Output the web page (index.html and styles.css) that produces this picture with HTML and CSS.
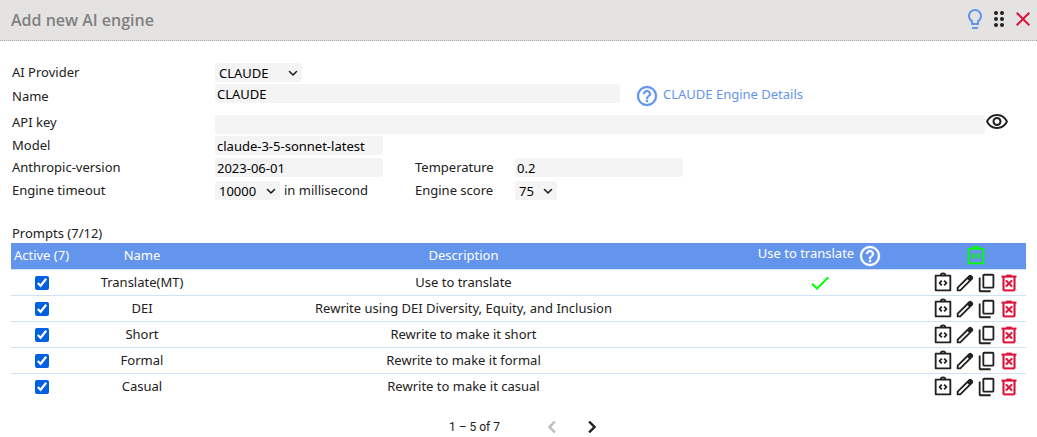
FILE: index.html
```
<!DOCTYPE html>
<html lang="en">
<head>
<meta charset="utf-8">
<title>Add new AI engine</title>
<link rel="stylesheet" href="styles.css">
</head>
<body>
<svg class="sprite" aria-hidden="true">
  <symbol id="bulb" viewBox="0 0 24 24"><path d="M9 21c0 .55.45 1 1 1h4c.55 0 1-.45 1-1v-1H9v1zm3-19C8.14 2 5 5.14 5 9c0 2.38 1.19 4.47 3 5.74V17c0 .55.45 1 1 1h6c.55 0 1-.45 1-1v-2.26c1.81-1.27 3-3.36 3-5.74 0-3.86-3.14-7-7-7zm2.85 11.1l-.85.6V16h-4v-2.3l-.85-.6A5 5 0 0 1 7 9c0-2.76 2.24-5 5-5s5 2.24 5 5c0 1.63-.8 3.16-2.15 4.1z"/></symbol>
  <symbol id="drag" viewBox="0 0 24 24"><circle cx="9" cy="6" r="2"/><circle cx="9" cy="12" r="2"/><circle cx="9" cy="18" r="2"/><circle cx="15" cy="6" r="2"/><circle cx="15" cy="12" r="2"/><circle cx="15" cy="18" r="2"/></symbol>
  <symbol id="close" viewBox="0 0 24 24"><path d="M19 6.41 17.59 5 12 10.59 6.41 5 5 6.41 10.59 12 5 17.59 6.41 19 12 13.41 17.59 19 19 17.59 13.41 12z"/></symbol>
  <symbol id="help" viewBox="0 0 24 24"><path d="M11 18h2v-2h-2v2zm1-16C6.48 2 2 6.48 2 12s4.48 10 10 10 10-4.48 10-10S17.52 2 12 2zm0 18c-4.41 0-8-3.59-8-8s3.59-8 8-8 8 3.59 8 8-3.59 8-8 8zm0-14c-2.21 0-4 1.79-4 4h2c0-1.1.9-2 2-2s2 .9 2 2c0 2-3 1.75-3 5h2c0-2.25 3-2.5 3-5 0-2.21-1.79-4-4-4z" stroke="currentColor" stroke-width=".3"/></symbol>
  <symbol id="eye" viewBox="0 0 24 24"><path d="M12 6c3.79 0 7.17 2.13 8.82 5.5C19.17 14.87 15.79 17 12 17s-7.17-2.13-8.82-5.5C4.83 8.13 8.21 6 12 6m0-2C7 4 2.73 7.11 1 11.5 2.73 15.89 7 19 12 19s9.270-3.11 11-7.500C21.270 7.110 17 4 12 4zm0 5a2.500 2.500 0 0 1 0 5 2.500 2.500 0 0 1 0-5m0-2a4.500 4.500 0 0 0 0 9 4.500 4.500 0 0 0 0-9z"/></symbol>
  <symbol id="code" viewBox="0 0 24 24"><path d="M4 4h16v16H4zM9.500 4a2.500 2.500 0 0 1 5 0M10.700 9.300 8.200 12l2.500 2.700M13.300 9.300l2.500 2.700-2.500 2.700" fill="none" stroke="currentColor" stroke-width="2" stroke-linejoin="round"/></symbol>
  <symbol id="edit" viewBox="0 0 24 24"><path d="M5 19h1.425L16.200 9.225 14.775 7.800 5 17.575zm-2 2v-4.250L16.200 3.575q.3-.275.663-.425t.762-.15.775.15.65.45L20.425 5q.3.275.438.65T21 6.400q0 .4-.137.763t-.438.662L7.250 21z"/></symbol>
  <symbol id="copy" viewBox="0 0 24 24"><path d="M9 18q-.825 0-1.412-.587T7 16V4q0-.825.588-1.412T9 2h9q.825 0 1.413.588T20 4v12q0 .825-.587 1.413T18 18zm0-2h9V4H9zm-4 6q-.825 0-1.412-.587T3 20V6h2v14h11v2z"/></symbol>
  <symbol id="trash" viewBox="0 0 24 24"><path fill-rule="evenodd" d="M7 21q-.825 0-1.412-.587T5 19V6H4V4h5V3h6v1h5v2h-1v13q0 .825-.587 1.413T17 21zM17 6H7v13h10zM9.400 16.500l2.600-2.600 2.600 2.600 1.400-1.400-2.600-2.600L16 9.900l-1.400-1.400-2.600 2.600-2.600-2.600L8 9.900l2.600 2.600L8 15.100z" stroke="currentColor" stroke-width=".3"/></symbol>
  <symbol id="done" viewBox="0 0 24 24"><path d="M9 16.200 4.800 12l-1.400 1.400L9 19 21 7l-1.400-1.400z"/></symbol>
  <symbol id="prev" viewBox="0 0 24 24"><path d="M15.410 7.410 14 6l-6 6 6 6 1.410-1.410L10.830 12z" stroke="currentColor" stroke-width=".5"/></symbol>
  <symbol id="next" viewBox="0 0 24 24"><path d="M10 6 8.590 7.410 13.170 12l-4.580 4.590L10 18l6-6z" stroke="currentColor" stroke-width=".5"/></symbol>
  <symbol id="down" viewBox="0 0 10 10"><path d="M1.500 3.500 5 7l3.500-3.500" fill="none" stroke="currentColor" stroke-width="1.600" stroke-linecap="round" stroke-linejoin="round"/></symbol>
</svg>

<header class="titlebar">
  <h1 class="title">Add new AI engine</h1>
  <div class="tools">
    <button class="icon-btn blue" aria-label="Tips"><svg class="icon"><use href="#bulb"/></svg></button>
    <button class="icon-btn" aria-label="Move"><svg class="icon"><use href="#drag"/></svg></button>
    <button class="icon-btn red" aria-label="Close"><svg class="icon"><use href="#close"/></svg></button>
  </div>
</header>

<main class="content">
  <form class="form">
    <div class="row">
      <label class="label" for="provider">AI Provider</label>
      <div class="select"><select class="field provider" id="provider"><option>CLAUDE</option></select><svg class="arrow"><use href="#down"/></svg></div>
    </div>
    <div class="row row-name">
      <label class="label" for="name">Name</label>
      <input class="field name" id="name" value="CLAUDE">
      <a class="details" href="#"><svg class="icon"><use href="#help"/></svg><span class="details-text">CLAUDE Engine Details</span></a>
    </div>
    <div class="row row-key">
      <label class="label" for="key">API key</label>
      <input class="field key" id="key" type="password">
      <button class="icon-btn" type="button" aria-label="Show key"><svg class="icon"><use href="#eye"/></svg></button>
    </div>
    <div class="row row-model">
      <label class="label" for="model">Model</label>
      <input class="field short" id="model" value="claude-3-5-sonnet-latest">
    </div>
    <div class="row row-pair">
      <label class="label" for="version">Anthropic-version</label>
      <div class="cell"><input class="field short" id="version" value="2023-06-01"></div>
      <label class="label-2" for="temp">Temperature</label>
      <input class="field short" id="temp" value="0.2">
    </div>
    <div class="row row-pair">
      <label class="label" for="timeout">Engine timeout</label>
      <div class="cell"><div class="select"><select class="field timeout" id="timeout"><option>10000</option></select><svg class="arrow"><use href="#down"/></svg></div><span>in millisecond</span></div>
      <label class="label-2" for="score">Engine score</label>
      <div class="select"><select class="field score" id="score"><option>75</option></select><svg class="arrow"><use href="#down"/></svg></div>
    </div>
  </form>

  <h2 class="subtitle">Prompts (7/12)</h2>
  <table class="prompts">
    <colgroup><col class="c-active"><col class="c-name"><col><col class="c-use"><col class="c-actions"></colgroup>
    <thead>
      <tr>
        <th>Active (7)</th><th>Name</th><th>Description</th>
        <th><div class="use-head"><span>Use to translate</span><svg class="icon"><use href="#help"/></svg></div></th>
        <th><div class="actions"><button class="icon-btn small green" aria-label="Add prompt"><svg class="icon"><use href="#code"/></svg></button></div></th>
      </tr>
    </thead>
    <tbody>
      <tr>
        <td><input class="check" type="checkbox" checked aria-label="Translate(MT) active"></td><td>Translate(MT)</td><td>Use to translate</td>
        <td><svg class="icon done"><use href="#done"/></svg></td>
        <td><div class="actions"><button class="icon-btn small" aria-label="Code"><svg class="icon"><use href="#code"/></svg></button><button class="icon-btn small" aria-label="Edit"><svg class="icon"><use href="#edit"/></svg></button><button class="icon-btn small" aria-label="Copy"><svg class="icon"><use href="#copy"/></svg></button><button class="icon-btn small red" aria-label="Delete"><svg class="icon"><use href="#trash"/></svg></button></div></td>
      </tr>
      <tr>
        <td><input class="check" type="checkbox" checked aria-label="DEI active"></td><td>DEI</td><td>Rewrite using DEI Diversity, Equity, and Inclusion</td>
        <td></td>
        <td><div class="actions"><button class="icon-btn small" aria-label="Code"><svg class="icon"><use href="#code"/></svg></button><button class="icon-btn small" aria-label="Edit"><svg class="icon"><use href="#edit"/></svg></button><button class="icon-btn small" aria-label="Copy"><svg class="icon"><use href="#copy"/></svg></button><button class="icon-btn small red" aria-label="Delete"><svg class="icon"><use href="#trash"/></svg></button></div></td>
      </tr>
      <tr>
        <td><input class="check" type="checkbox" checked aria-label="Short active"></td><td>Short</td><td>Rewrite to make it short</td>
        <td></td>
        <td><div class="actions"><button class="icon-btn small" aria-label="Code"><svg class="icon"><use href="#code"/></svg></button><button class="icon-btn small" aria-label="Edit"><svg class="icon"><use href="#edit"/></svg></button><button class="icon-btn small" aria-label="Copy"><svg class="icon"><use href="#copy"/></svg></button><button class="icon-btn small red" aria-label="Delete"><svg class="icon"><use href="#trash"/></svg></button></div></td>
      </tr>
      <tr>
        <td><input class="check" type="checkbox" checked aria-label="Formal active"></td><td>Formal</td><td>Rewrite to make it formal</td>
        <td></td>
        <td><div class="actions"><button class="icon-btn small" aria-label="Code"><svg class="icon"><use href="#code"/></svg></button><button class="icon-btn small" aria-label="Edit"><svg class="icon"><use href="#edit"/></svg></button><button class="icon-btn small" aria-label="Copy"><svg class="icon"><use href="#copy"/></svg></button><button class="icon-btn small red" aria-label="Delete"><svg class="icon"><use href="#trash"/></svg></button></div></td>
      </tr>
      <tr>
        <td><input class="check" type="checkbox" checked aria-label="Casual active"></td><td>Casual</td><td>Rewrite to make it casual</td>
        <td></td>
        <td><div class="actions"><button class="icon-btn small" aria-label="Code"><svg class="icon"><use href="#code"/></svg></button><button class="icon-btn small" aria-label="Edit"><svg class="icon"><use href="#edit"/></svg></button><button class="icon-btn small" aria-label="Copy"><svg class="icon"><use href="#copy"/></svg></button><button class="icon-btn small red" aria-label="Delete"><svg class="icon"><use href="#trash"/></svg></button></div></td>
      </tr>
    </tbody>
  </table>

  <nav class="pager" aria-label="Pages">
    <span class="range">1 – 5 of 7</span>
    <button class="icon-btn faded" disabled aria-label="Previous page"><svg class="icon"><use href="#prev"/></svg></button>
    <button class="icon-btn" aria-label="Next page"><svg class="icon"><use href="#next"/></svg></button>
  </nav>
</main>
</body>
</html>
```
FILE: styles.css
```
* { box-sizing: border-box; }
body {
  margin: 0;
  background: #fff;
  color: #212121;
  font-family: "Noto Sans", sans-serif;
  font-size: 13px;
  line-height: 19px;
}
.sprite { display: none; }
.icon {
  display: block;
  flex: none;
  width: 24px;
  height: 24px;
  fill: currentColor;
}
.icon-btn {
  flex: none;
  padding: 0;
  border: 0;
  background: none;
  color: #212121;
}
.small .icon { width: 22px; height: 22px; }
.icon-btn.blue { color: #6495ed; }
.icon-btn.red { color: #dc143c; }
.icon-btn.green { color: #0f0; }
.icon-btn.faded { color: #bdbdbd; }

.titlebar {
  display: flex;
  align-items: center;
  justify-content: space-between;
  height: 41px;
  padding: 0 2px 2px 11px;
  background: #e4e3e2;
  border-bottom: 1px dotted #aaa;
}
.title {
  margin: 0;
  padding-top: 2px;
  color: #808080;
  font-family: "Open Sans", sans-serif;
  font-size: 16px;
  font-weight: 600;
}
.tools { display: flex; }

.content { padding: 22px 11px 0; }
.row {
  display: flex;
  align-items: center;
  min-height: 19px;
  margin-bottom: 2px;
}
.label { flex: none; width: 204px; padding-left: 1px; }
.label-2 { flex: none; width: 100px; }
.cell {
  display: flex;
  flex: none;
  gap: 4px;
  width: 200px;
}
.field {
  height: 19px;
  padding: 0 2px;
  border: 0;
  border-radius: 3px;
  background: #f4f4f4;
  color: #000;
  font-family: "Noto Sans", sans-serif;
  font-size: 13px;
}
.select { position: relative; display: flex; }
select.field {
  appearance: none;
  padding: 0 18px 0 4px;
}
.arrow {
  position: absolute;
  top: 5px;
  right: 4px;
  width: 10px;
  height: 10px;
  pointer-events: none;
}
.provider { width: 87px; }
.name { width: 405px; }
.key { flex: 1; }
.short { width: 168px; }
.timeout { width: 65px; }
.score { width: 42px; }
.row-name { align-items: flex-start; min-height: 24px; }
.row-name .label { padding-top: 3px; }
.details {
  display: flex;
  gap: 4px;
  margin-left: 15px;
  color: #6495ed;
  text-decoration: none;
}
.details-text { padding-top: 1px; }
.row-key { align-items: flex-end; min-height: 24px; }
.row-key .label { padding-bottom: 2px; }
.row-key .icon-btn { margin-right: 17px; }
.row-model { margin-bottom: 3px; }
.row-pair { margin-bottom: 4px; }

.subtitle {
  margin: 24px 0 0;
  padding-left: 1px;
  font-size: 13px;
  font-weight: 400;
}
.prompts {
  width: 100%;
  border-collapse: collapse;
  table-layout: fixed;
  text-align: center;
}
.c-active { width: 61px; }
.c-name { width: 140px; }
.c-use { width: 210px; }
.c-actions { width: 101px; }
.prompts th, .prompts td { height: 26px; padding: 0; }
.prompts th {
  background: #6495ed;
  color: #fff;
  font-weight: 400;
  white-space: nowrap;
}
.prompts td { padding-top: 1px; border-top: 1px solid #cfe2f8; }
.use-head {
  display: flex;
  justify-content: center;
  gap: 4px;
}
.actions { display: flex; justify-content: center; }
.check {
  display: block;
  width: 14px;
  height: 14px;
  margin: 0 auto;
  accent-color: #0061e0;
}
.done { margin: 0 auto; color: #0f0; }

.pager {
  display: flex;
  align-items: center;
  justify-content: center;
  gap: 16px;
  padding: 16px 0 0 16px;
}
.range {
  margin-right: 24px;
  font-family: Roboto, sans-serif;
  font-size: 12px;
}
```
